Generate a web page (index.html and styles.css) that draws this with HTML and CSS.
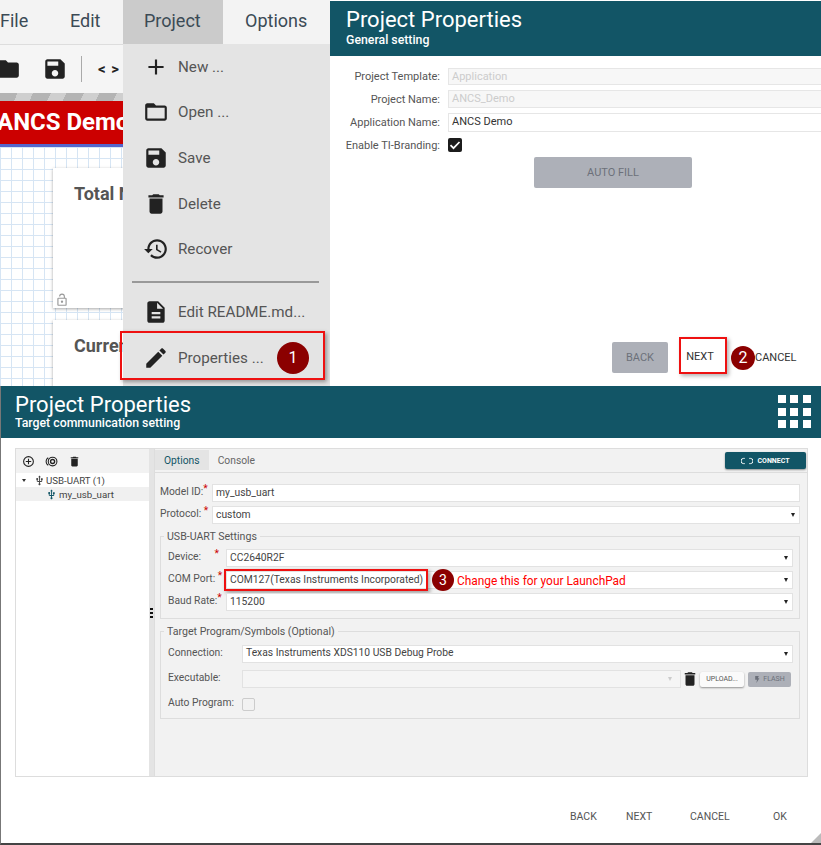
FILE: index.html
```html
<!DOCTYPE html>
<html lang="en">

<head>
    <meta charset="UTF-8">
    <meta name="viewport" content="width=device-width, initial-scale=1.0">
    <title>Project Properties</title>
    <link rel="stylesheet" href="styles.css">
</head>

<body>
    <svg class="defs" width="0" height="0">
        <symbol id="i-plus" viewBox="0 0 24 24"><path d="M19 13h-6v6h-2v-6H5v-2h6V5h2v6h6v2z"/></symbol>
        <symbol id="i-folder" viewBox="0 0 24 24"><path d="M20 6h-8l-2-2H4c-1.1 0-2 .9-2 2v12c0 1.1.9 2 2 2h16c1.1 0 2-.9 2-2V8c0-1.1-.9-2-2-2zm0 12H4V8h16v10z"/></symbol>
        <symbol id="i-folder-solid" viewBox="0 0 24 24"><path d="M10 4H4c-1.1 0-2 .9-2 2v12c0 1.1.9 2 2 2h16c1.1 0 2-.9 2-2V8c0-1.1-.9-2-2-2h-8l-2-2z"/></symbol>
        <symbol id="i-save" viewBox="0 0 24 24"><path d="M17 3H5c-1.11 0-2 .9-2 2v14c0 1.1.89 2 2 2h14c1.1 0 2-.9 2-2V7l-4-4zm-5 16c-1.66 0-3-1.34-3-3s1.34-3 3-3 3 1.34 3 3-1.34 3-3 3zm3-10H5V5h10v4z"/></symbol>
        <symbol id="i-trash" viewBox="0 0 24 24"><path d="M6 19c0 1.1.9 2 2 2h8c1.1 0 2-.9 2-2V7H6v12zM19 4h-3.5l-1-1h-5l-1 1H5v2h14V4z"/></symbol>
        <symbol id="i-restore" viewBox="0 0 24 24"><path d="M13 3c-4.97 0-9 4.03-9 9H1l3.89 3.89.07.14L9 12H6c0-3.87 3.13-7 7-7s7 3.13 7 7-3.13 7-7 7c-1.93 0-3.68-.79-4.94-2.06l-1.42 1.42C8.27 19.99 10.51 21 13 21c4.97 0 9-4.03 9-9s-4.03-9-9-9zm-1 5v5l4.28 2.54.72-1.21-3.5-2.08V8H12z"/></symbol>
        <symbol id="i-file" viewBox="0 0 24 24"><path d="M14 2H6c-1.1 0-2 .9-2 2v16c0 1.1.9 2 2 2h12c1.1 0 2-.9 2-2V8l-6-6zm2 16H8v-2h8v2zm0-4H8v-2h8v2zm-3-5V3.5L18.5 9H13z"/></symbol>
        <symbol id="i-pencil" viewBox="0 0 24 24"><path d="M3 17.25V21h3.75L17.81 9.94l-3.75-3.75L3 17.25zM20.71 7.04c.39-.39.39-1.02 0-1.41l-2.34-2.34c-.39-.39-1.02-.39-1.41 0l-1.83 1.83 3.75 3.75 1.83-1.83z"/></symbol>
        <symbol id="i-usb" viewBox="0 0 24 24"><path d="M15 7v4h1v2h-3V5h2l-3-4-3 4h2v8H8v-2.07c.7-.37 1.2-1.08 1.2-1.93 0-1.21-.99-2.2-2.2-2.2S4.8 7.79 4.8 9c0 .85.5 1.56 1.2 1.93V13c0 1.11.89 2 2 2h3v3.05c-.71.37-1.2 1.1-1.2 1.95 0 1.22.99 2.2 2.2 2.2s2.2-.98 2.2-2.2c0-.85-.49-1.58-1.2-1.95V15h3c1.11 0 2-.89 2-2v-2h1V7h-4z"/></symbol>
    </svg>

    <div class="top">
        <section class="designer">
            <nav class="menubar">
                <span class="menu menu-file">File</span>
                <span class="menu menu-edit">Edit</span>
                <span class="menu menu-project">Project</span>
                <span class="menu menu-options">Options</span>
            </nav>
            <div class="toolbar">
                <svg class="tool-icon tool-folder"><use href="#i-folder-solid"/></svg>
                <svg class="tool-icon tool-save"><use href="#i-save"/></svg>
                <span class="tool-sep"></span>
                <span class="tool-code">&lt; &gt;</span>
            </div>
            <div class="hatch"></div>
            <div class="app-title">ANCS Demo</div>
            <div class="canvas">
                <div class="tile tile-total">
                    <h3>Total N</h3>
                    <svg class="lock" viewBox="0 0 24 24"><path d="M12 17a2 2 0 1 0 0-4 2 2 0 0 0 0 4zm6-9h-1V6A5 5 0 0 0 7 6h1.9a3.1 3.1 0 0 1 6.2 0v2H6a2 2 0 0 0-2 2v10c0 1.1.9 2 2 2h12a2 2 0 0 0 2-2V10a2 2 0 0 0-2-2zm0 12H6V10h12v10z"/></svg>
                </div>
                <div class="tile tile-current">
                    <h3>Curren</h3>
                </div>
            </div>

            <ul class="dropdown">
                <li><svg><use href="#i-plus"/></svg>New ...</li>
                <li><svg><use href="#i-folder"/></svg>Open ...</li>
                <li><svg><use href="#i-save"/></svg>Save</li>
                <li><svg><use href="#i-trash"/></svg>Delete</li>
                <li><svg><use href="#i-restore"/></svg>Recover</li>
                <li class="dropdown-sep"></li>
                <li><svg><use href="#i-file"/></svg>Edit README.md...</li>
                <li><svg><use href="#i-pencil"/></svg>Properties ...</li>
            </ul>
            <div class="callout callout-props"></div>
            <span class="badge badge-1">1</span>
        </section>

        <section class="general">
            <header class="banner banner-general">
                <h1>Project Properties</h1>
                <h2>General setting</h2>
            </header>
            <div class="general-form">
                <label class="g-row g-row-1"><span>Project Template:</span><span class="g-input g-off">Application</span></label>
                <label class="g-row g-row-2"><span>Project Name:</span><span class="g-input g-off">ANCS_Demo</span></label>
                <label class="g-row g-row-3"><span>Application Name:</span><span class="g-input">ANCS Demo</span></label>
                <label class="g-row g-row-4"><span>Enable TI-Branding:</span>
                    <span class="g-check"><svg viewBox="0 0 14 14"><path d="M2.5 7.2l3 3 6-6.2" fill="none" stroke="#fff" stroke-width="1.7"/></svg></span>
                </label>
                <div class="autofill">AUTO FILL</div>
            </div>
            <div class="general-foot">
                <span class="btn-back">BACK</span>
                <span class="btn-next">NEXT</span>
                <span class="badge badge-2">2</span>
                <span class="btn-cancel">CANCEL</span>
            </div>
        </section>
    </div>

    <section class="target">
        <header class="banner banner-target">
            <div>
                <h1>Project Properties</h1>
                <h2>Target communication setting</h2>
            </div>
            <div class="grid-icon">
                <i></i><i></i><i></i><i></i><i></i><i></i><i></i><i></i><i></i>
            </div>
        </header>

        <div class="workspace">
            <aside class="tree">
                <div class="tree-tools">
                    <svg viewBox="0 0 24 24"><path d="M12 2a10 10 0 1 0 0 20 10 10 0 0 0 0-20zm0 18a8 8 0 1 1 0-16 8 8 0 0 1 0 16zm1-9V7h-2v4H7v2h4v4h2v-4h4v-2z"/></svg>
                    <svg viewBox="0 0 24 24"><path d="M14 7a5 5 0 1 0 0 10 5 5 0 0 0 0-10zm0 7.5a2.5 2.5 0 1 1 0-5 2.5 2.5 0 0 1 0 5zM14 3a9 9 0 1 0 0 18 9 9 0 0 0 0-18zm0 16a7 7 0 1 1 0-14 7 7 0 0 1 0 14zM3 12a7 7 0 0 1 3.5-6l-1-1.7A9 9 0 0 0 5.5 19.7l1-1.7A7 7 0 0 1 3 12z"/></svg>
                    <svg viewBox="0 0 24 24"><use href="#i-trash"/></svg>
                </div>
                <div class="tree-node"><span class="tree-arrow"></span><svg><use href="#i-usb"/></svg>USB-UART (1)</div>
                <div class="tree-node tree-leaf"><svg><use href="#i-usb"/></svg>my_usb_uart</div>
            </aside>
            <div class="splitter"><span class="grip"></span></div>

            <div class="panel">
                <div class="tabs">
                    <span class="tab tab-on">Options</span>
                    <span class="tab">Console</span>
                    <span class="connect">
                        <svg viewBox="0 0 16 10"><path d="M5 1.5H3.5a3.5 3.5 0 0 0 0 7H5M11 1.5h1.5a3.5 3.5 0 0 1 0 7H11" fill="none" stroke="#fff" stroke-width="1.3"/></svg>
                        CONNECT
                    </span>
                </div>
                <div class="panel-body">
                    <div class="f-row f-top">
                        <span class="f-label">Model ID:<b>*</b></span>
                        <span class="f-input">my_usb_uart</span>
                    </div>
                    <div class="f-row f-top">
                        <span class="f-label">Protocol: <b>*</b></span>
                        <span class="f-input f-select">custom</span>
                    </div>

                    <fieldset class="group group-usb">
                        <legend>USB-UART Settings</legend>
                        <div class="f-row">
                            <span class="f-label">Device: <b class="star-far">*</b></span>
                            <span class="f-input f-select">CC2640R2F</span>
                        </div>
                        <div class="f-row">
                            <span class="f-label">COM Port: <b>*</b></span>
                            <span class="f-input f-select">COM127(Texas Instruments Incorporated)
                                <span class="note"><span class="badge badge-3">3</span>Change this for your LaunchPad</span>
                            </span>
                            <div class="callout callout-com"></div>
                        </div>
                        <div class="f-row">
                            <span class="f-label">Baud Rate:<b>*</b></span>
                            <span class="f-input f-select">115200</span>
                        </div>
                    </fieldset>

                    <fieldset class="group group-prog">
                        <legend>Target Program/Symbols (Optional)</legend>
                        <div class="p-row">
                            <span class="p-label">Connection:</span>
                            <span class="f-input f-select">Texas Instruments XDS110 USB Debug Probe</span>
                        </div>
                        <div class="p-row">
                            <span class="p-label">Executable:</span>
                            <span class="f-input f-select f-off"></span>
                            <svg class="exe-trash"><use href="#i-trash"/></svg>
                            <span class="upload">UPLOAD...</span>
                            <span class="flash">
                                <svg viewBox="0 0 10 12"><path d="M2 0h6L6.5 4H9l-5 8 1-5.5H2z"/></svg>
                                FLASH
                            </span>
                        </div>
                        <div class="p-row">
                            <span class="p-label">Auto Program:</span>
                            <span class="p-check"></span>
                        </div>
                    </fieldset>
                </div>
            </div>
        </div>

        <footer class="target-foot">
            <span class="foot-back">BACK</span>
            <span class="foot-next">NEXT</span>
            <span class="foot-cancel">CANCEL</span>
            <span class="foot-ok">OK</span>
        </footer>
        <span class="resize"></span>
    </section>
</body>

</html>
```

FILE: styles.css
```css
* {
    box-sizing: border-box;
}

body {
    margin: 0;
    width: 821px;
    height: 845px;
    overflow: hidden;
    font-family: Roboto, "Liberation Sans", sans-serif;
    color: #333;
    background: #fff;
}

.defs {
    position: absolute;
}

svg {
    fill: currentColor;
}

h1,
h2,
h3 {
    margin: 0;
    font-weight: 400;
}

/* top half */
.top {
    display: flex;
    height: 386px;
}

.designer {
    position: relative;
    width: 330px;
    overflow: hidden;
    background: #fff;
}

.menubar {
    display: flex;
    height: 44px;
    background: #f3f3f3;
    font-size: 18px;
    color: #3b4a55;
    line-height: 42px;
}

.menu {
    display: block;
}

.menu-file {
    width: 70px;
}

.menu-edit {
    width: 53px;
}

.menu-project {
    width: 100px;
    padding-left: 21px;
    background: #cbcbcb;
}

.menu-options {
    padding-left: 22px;
}

.toolbar {
    display: flex;
    align-items: center;
    height: 49px;
    background: #f5f5f5;
    border-top: 1px solid #ddd;
    color: #222;
}

.tool-icon {
    width: 26px;
    height: 26px;
}

.tool-folder {
    margin-left: -5px;
}

.tool-save {
    margin-left: 21px;
}

.tool-sep {
    width: 1px;
    height: 26px;
    margin-left: 13px;
    background: #aaa;
}

.tool-code {
    margin-left: 16px;
    font-size: 15px;
    font-weight: 700;
    letter-spacing: 1px;
}

.hatch {
    height: 8px;
    background: repeating-linear-gradient(115deg, #b4b4b4 0 16px, #cfcfcf 16px 30px);
}

.app-title {
    height: 46px;
    text-indent: -3px;
    background: #cc0000;
    border-bottom: 3px solid #5566cc;
    color: #fff;
    font-size: 24px;
    font-weight: 700;
    line-height: 43px;
    white-space: nowrap;
}

.canvas {
    position: relative;
    height: 239px;
    padding: 21px 0 0 53px;
    background-color: #fff;
    background-image:
        linear-gradient(#d6e5f4 1px, transparent 1px),
        linear-gradient(90deg, #d6e5f4 1px, transparent 1px);
    background-size: 11px 11px;
}

.tile {
    width: 100px;
    padding: 15px 21px;
    background: #fff;
    box-shadow: 0 1px 3px rgba(0, 0, 0, 0.35);
    color: #555;
    white-space: nowrap;
    overflow: hidden;
    position: relative;
}

.tile h3 {
    font-size: 18px;
    font-weight: 700;
}

.tile-total {
    height: 140px;
    margin-bottom: 12px;
}

.tile-current {
    height: 70px;
}

.lock {
    position: absolute;
    left: 2px;
    bottom: 0;
    width: 14px;
    height: 16px;
    color: #999;
}

.dropdown {
    position: absolute;
    left: 123px;
    top: 44px;
    width: 207px;
    height: 342px;
    margin: 0;
    padding: 0;
    list-style: none;
    background: #e4e4e4;
    font-size: 15.2px;
    color: #555;
}

.dropdown li {
    display: flex;
    align-items: center;
    height: 45.6px;
    padding-left: 20px;
}

.dropdown li svg {
    width: 26px;
    height: 26px;
    margin-right: 9px;
    color: #222;
}

.dropdown .dropdown-sep {
    height: 2px;
    margin: 9px 11px 6.5px 9px;
    padding: 0;
    background: #999;
}

.callout {
    position: absolute;
    border: 2px solid #ee1111;
    box-shadow: 2px 2px 4px rgba(0, 0, 0, 0.35);
}

.callout-props {
    left: 120px;
    top: 331px;
    width: 205px;
    height: 49px;
}

.badge {
    position: absolute;
    width: 32px;
    height: 32px;
    border-radius: 50%;
    background: #8b0000;
    color: #fff;
    font-size: 16px;
    line-height: 32px;
    text-align: center;
}

.badge-1 {
    left: 277px;
    top: 342px;
}

.badge-2 {
    left: 401px;
    top: 15px;
    width: 24px;
    height: 24px;
    line-height: 24px;
}

.badge-3 {
    left: 0;
    top: -4px;
    width: 22px;
    height: 22px;
    line-height: 22px;
    font-size: 14px;
}

.banner {
    background: #125566;
    color: #fff;
}

.banner h1 {
    font-size: 22px;
    line-height: 26px;
}

.banner h2 {
    font-size: 12.3px;
    font-weight: 500;
    line-height: 15px;
}

.general {
    position: relative;
    flex: 1;
    font-size: 11px;
}

.banner-general {
    height: 55px;
    margin-top: 1px;
    padding: 6px 0 0 16px;
}

.general-form {
    padding: 12px 0 0;
}

.g-row {
    display: flex;
    align-items: center;
    color: #555;
}

.g-row > span:first-child {
    width: 110px;
    text-align: right;
    margin-right: 9px;
}

.g-row-1 {
    height: 17px;
    margin-bottom: 5px;
}

.g-row-2 {
    height: 18px;
    margin-bottom: 5px;
}

.g-row-3 {
    height: 19px;
    margin-bottom: 5px;
}

.g-row-4 {
    height: 16px;
}

.g-input {
    flex: 1;
    height: 100%;
    margin-left: -1px;
    padding-left: 3px;
    border: 1px solid #e6e6e6;
    border-right: 0;
    color: #333;
    line-height: 16px;
}

.g-off {
    background: #f7f7f7;
    color: #ccc;
}

.g-check {
    display: block;
    width: 14px;
    height: 14px;
    margin-left: -1px;
    border-radius: 2px;
    background: #1c1c1c;
}

.g-check svg {
    display: block;
}

.autofill {
    width: 158px;
    height: 31px;
    margin: 4px 0 0 204px;
    border-radius: 2px;
    background: #adb0b8;
    color: #6c707a;
    font-size: 11px;
    line-height: 31px;
    text-align: center;
}

.general-foot {
    position: absolute;
    left: 0;
    top: 331px;
    width: 100%;
    height: 55px;
    padding-left: 282px;
    display: flex;
    align-items: flex-start;
    font-size: 11px;
}

.btn-back {
    width: 56px;
    height: 31px;
    margin-top: 11px;
    border-radius: 2px;
    background: #adb0b8;
    color: #6c707a;
    line-height: 31px;
    text-align: center;
}

.btn-next {
    width: 48px;
    height: 37px;
    margin: 6px 0 0 11px;
    padding-right: 6px;
    border: 2px solid #ee1111;
    box-shadow: 2px 2px 4px rgba(0, 0, 0, 0.3);
    line-height: 35px;
    text-align: center;
}

.btn-cancel {
    position: absolute;
    left: 425px;
    top: 20px;
}

/* bottom half */
.target {
    position: relative;
    height: 459px;
    border-left: 1px solid #777;
    border-bottom: 2px solid #444;
    font-size: 10.3px;
}

.banner-target {
    display: flex;
    justify-content: space-between;
    height: 52px;
    padding: 6px 10px 0 14px;
}

.banner-target h2 {
    margin-top: -2px;
}

.grid-icon {
    display: grid;
    grid-template-columns: repeat(3, 8px);
    grid-auto-rows: 8px;
    gap: 4.7px;
    margin-top: 3px;
}

.grid-icon i {
    background: #fff;
}

.workspace {
    display: flex;
    height: 329px;
    margin: 10px 13px 0 14px;
    background: #f2f2f2;
    border: 1px solid #ddd;
}

.tree {
    width: 133px;
    background: #fff;
    color: #444;
}

.tree-tools {
    display: flex;
    align-items: center;
    gap: 10px;
    height: 24px;
    padding-left: 6px;
    background: #f2f2f2;
}

.tree-tools svg {
    width: 13px;
    height: 13px;
    color: #222;
}

.tree-node {
    display: flex;
    align-items: center;
    height: 14px;
    padding-left: 6px;
    font-size: 9.7px;
}

.tree-node svg {
    width: 11px;
    height: 11px;
    margin-right: 1px;
}

.tree-arrow {
    width: 0;
    height: 0;
    margin-right: 8px;
    border-top: 3px solid #333;
    border-left: 2.5px solid transparent;
    border-right: 2.5px solid transparent;
}

.tree-leaf {
    padding-left: 30px;
    background: #f0f0f0;
}

.tree-leaf svg {
    margin-right: 2px;
    color: #125566;
}

.splitter {
    width: 5px;
    background: #e4e4e4;
    position: relative;
}

.grip {
    position: absolute;
    top: 158px;
    left: 1px;
    width: 3px;
    height: 12px;
    background: radial-gradient(circle, #111 1.2px, transparent 1.5px) 0 0 / 3px 4px;
}

.panel {
    flex: 1;
    border-left: 1px solid #ddd;
}

.tabs {
    display: flex;
    align-items: flex-start;
    height: 24px;
    background: #f2f2f2;
    border-bottom: 1px solid #ddd;
}

.tab {
    height: 20px;
    margin-top: 1px;
    padding: 0 9px;
    line-height: 21px;
    color: #666;
    font-size: 10.3px;
}

.tab-on {
    background: #e4e4e4;
    color: #125566;
}

.connect {
    display: flex;
    align-items: center;
    justify-content: center;
    gap: 4px;
    width: 81px;
    height: 17px;
    margin: 3px 1px 0 auto;
    border-radius: 2px;
    background: #125566;
    box-shadow: 0 1px 2px rgba(0, 0, 0, 0.4);
    color: #fff;
    font-size: 7px;
    font-weight: 700;
}

.connect svg {
    width: 12px;
    height: 8px;
}

.panel-body {
    padding: 11px 7px 0 5px;
}

.f-row {
    position: relative;
    display: flex;
    height: 18px;
    margin-bottom: 4px;
    color: #555;
    line-height: 16px;
}

.f-top .f-label {
    width: 52px;
}

.f-label b,
.star-far {
    position: relative;
    top: -3px;
    color: #cc0000;
    font-weight: 400;
}

.f-input {
    position: relative;
    flex: 1;
    height: 100%;
    padding-left: 3px;
    background: #fff;
    border: 1px solid #e2e2e2;
    color: #444;
    white-space: nowrap;
}

.f-select::after {
    content: "";
    position: absolute;
    right: 4px;
    top: 6px;
    border-top: 4px solid #222;
    border-left: 2.5px solid transparent;
    border-right: 2.5px solid transparent;
}

.f-off {
    background: #f5f5f5;
}

.f-off::after {
    right: 8px;
    border-top-color: #ccc;
}

.group {
    margin: 0;
    padding: 3px 6px 2px 7px;
    border: 1px solid #ddd;
    min-width: 0;
    color: #555;
}

.group legend {
    margin-left: -4px;
    padding: 0 3px;
    font-size: 10.6px;
    line-height: 13px;
}

.group-usb {
    margin-top: 6px;
    padding-top: 6px;
    padding-bottom: 3px;
}

.group-prog {
    margin-top: 6px;
    padding-top: 7px;
}

.group-usb .f-label {
    width: 58px;
    white-space: nowrap;
}

.group-usb .star-far {
    margin-left: 11px;
}

.note {
    position: absolute;
    left: 205px;
    top: 1px;
    padding-left: 25px;
    color: #f00;
    font-size: 11.9px;
}

.callout-com {
    left: 56px;
    top: -2px;
    width: 204px;
    height: 22px;
}

.p-row {
    display: flex;
    align-items: center;
    height: 18px;
    margin-bottom: 7px;
}

.p-label {
    width: 74px;
    padding-bottom: 4px;
    flex-shrink: 0;
}

.group-prog .p-row:last-child {
    margin-bottom: 3px;
}

.exe-trash {
    width: 18px;
    height: 18px;
    flex-shrink: 0;
    color: #222;
}

.upload {
    width: 44px;
    height: 15px;
    margin: 0 4px 0 1px;
    border-radius: 2px;
    background: #fafafa;
    box-shadow: 0 1px 2px rgba(0, 0, 0, 0.4);
    color: #555;
    font-size: 7px;
    line-height: 15px;
    text-align: center;
    flex-shrink: 0;
}

.flash {
    display: flex;
    align-items: center;
    justify-content: center;
    gap: 3px;
    width: 43px;
    height: 15px;
    margin-right: 2px;
    border-radius: 2px;
    background: #adb0b8;
    color: #6c707a;
    font-size: 7px;
    flex-shrink: 0;
}

.flash svg {
    width: 6px;
    height: 9px;
}

.p-check {
    width: 13px;
    height: 13px;
    border: 1px solid #ccc;
    border-radius: 2px;
}

.target-foot {
    position: relative;
    height: 66px;
    font-size: 10.5px;
    color: #555;
}

.target-foot span {
    position: absolute;
    top: 33px;
}

.foot-back {
    left: 569px;
}

.foot-next {
    left: 625px;
}

.foot-cancel {
    left: 689px;
}

.foot-ok {
    left: 772px;
}

.resize {
    position: absolute;
    right: 0;
    bottom: 0;
    border-bottom: 10px solid #bbb;
    border-left: 10px solid transparent;
}
```
